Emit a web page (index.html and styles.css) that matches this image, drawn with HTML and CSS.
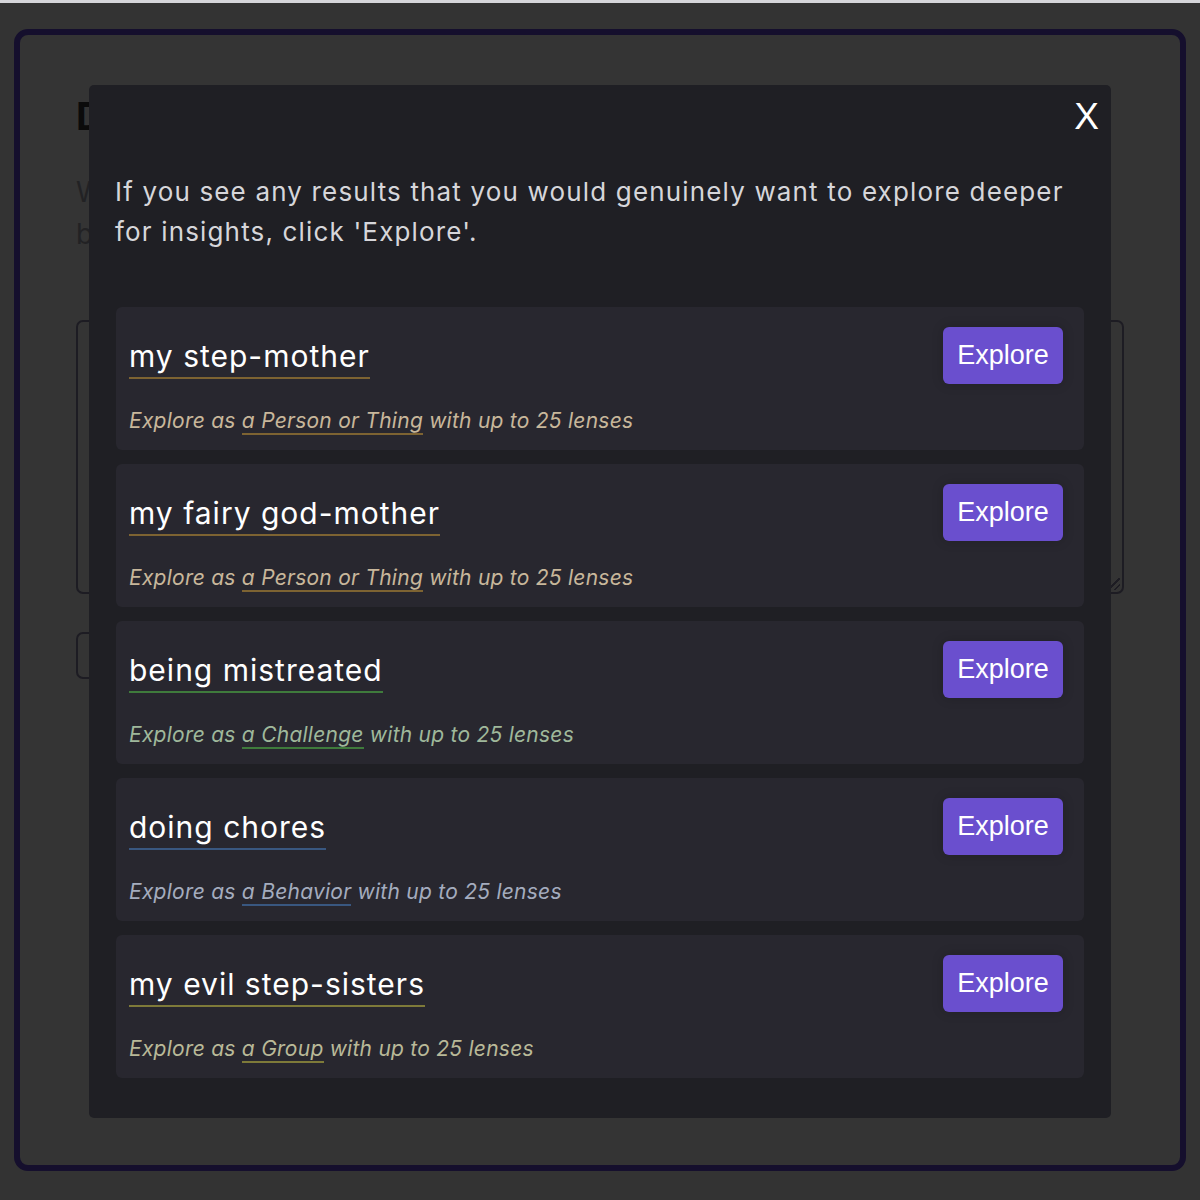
FILE: index.html
```html
<!DOCTYPE html>
<html lang="en">
<head>
<meta charset="utf-8">
<title>Explore results</title>
<link rel="stylesheet" href="styles.css">
</head>
<body>
<div class="topline"></div>
<div class="page">
  <div class="panel">
    <h1 class="panel-title">Describe</h1>
    <p class="panel-text">What is happening<br>but not</p>
    <div class="textarea"><span class="grip"></span></div>
    <div class="submit"></div>
  </div>
</div>

<div class="modal">
  <div class="modal-head"><span class="close">X</span></div>
  <p class="intro">If you see any results that you would genuinely want to explore deeper for insights, click 'Explore'.</p>
  <div class="results">
    <div class="result person">
      <div class="result-row">
        <span class="result-title">my step-mother</span>
        <button class="explore">Explore</button>
      </div>
      <p class="result-sub">Explore as <span class="kind">a Person or Thing</span> with up to 25 lenses</p>
    </div>
    <div class="result person">
      <div class="result-row">
        <span class="result-title">my fairy god-mother</span>
        <button class="explore">Explore</button>
      </div>
      <p class="result-sub">Explore as <span class="kind">a Person or Thing</span> with up to 25 lenses</p>
    </div>
    <div class="result challenge">
      <div class="result-row">
        <span class="result-title">being mistreated</span>
        <button class="explore">Explore</button>
      </div>
      <p class="result-sub">Explore as <span class="kind">a Challenge</span> with up to 25 lenses</p>
    </div>
    <div class="result behavior">
      <div class="result-row">
        <span class="result-title">doing chores</span>
        <button class="explore">Explore</button>
      </div>
      <p class="result-sub">Explore as <span class="kind">a Behavior</span> with up to 25 lenses</p>
    </div>
    <div class="result group">
      <div class="result-row">
        <span class="result-title">my evil step-sisters</span>
        <button class="explore">Explore</button>
      </div>
      <p class="result-sub">Explore as <span class="kind">a Group</span> with up to 25 lenses</p>
    </div>
  </div>
</div>
</body>
</html>
```

FILE: styles.css
```css
* { box-sizing: border-box; }
html, body { margin: 0; padding: 0; }
body {
  background: #333333;
  width: 1200px;
  height: 1200px;
  overflow: hidden;
  position: relative;
  font-family: Inter, "Noto Sans", sans-serif;
}
.topline {
  height: 3px;
  background: #d6d6da;
}
.page {
  padding: 26px 14px 0 14px;
}
.panel {
  height: 1142px;
  border: 6px solid #150f2d;
  border-radius: 14px;
  background: #343434;
  padding: 58px 56px 0 56px;
}
.panel-title {
  margin: 0;
  font-family: Inter, sans-serif;
  font-weight: 700;
  font-size: 38px;
  line-height: 46px;
  color: #0b0b0b;
}
.panel-text {
  margin: 32px 0 0 0;
  font-family: Inter, sans-serif;
  font-size: 28px;
  line-height: 42px;
  color: #222224;
}
.textarea {
  position: relative;
  margin-top: 65px;
  height: 274px;
  border: 2px solid #1d1c23;
  border-radius: 7px;
}
.grip {
  position: absolute;
  right: 2px;
  bottom: 2px;
  width: 12px;
  height: 12px;
  background: linear-gradient(135deg, transparent 45%, #1d1c23 45%, #1d1c23 55%, transparent 55%, transparent 72%, #1d1c23 72%, #1d1c23 82%, transparent 82%);
}
.submit {
  margin-top: 38px;
  width: 220px;
  height: 47px;
  border: 2px solid #1d1c23;
  border-radius: 7px;
}

.modal {
  position: absolute;
  left: 89px;
  top: 85px;
  width: 1022px;
  background: #1f1f24;
  border-radius: 5px;
  padding: 13px 12px 40px 26px;
}
.modal-head {
  display: flex;
  justify-content: flex-end;
}
.close {
  font-family: "Liberation Sans", Arial, sans-serif;
  font-size: 37px;
  line-height: 37px;
  color: #ffffff;
}
.intro {
  margin: 37px 14px 0 0;
  font-size: 26px;
  line-height: 40px;
  letter-spacing: 1.16px;
  color: #d6d6da;
}
.results {
  margin: 55px 15px 0 1px;
  display: flex;
  flex-direction: column;
  gap: 14px;
}
.result {
  background: #28272f;
  border-radius: 6px;
  padding: 20px 21px 15px 13px;
}
.result-row {
  display: flex;
  justify-content: space-between;
  align-items: flex-start;
}
.result-title {
  margin-top: 11px;
  font-size: 30px;
  line-height: 36px;
  letter-spacing: 1px;
  color: #ffffff;
  padding-bottom: 3px;
  border-bottom: 2px solid #7d6332;
}
.explore {
  width: 120px;
  height: 57px;
  border: none;
  border-radius: 6px;
  background: #6a4fce;
  color: #ffffff;
  font-family: "Liberation Sans", Arial, sans-serif;
  font-size: 27px;
  padding: 0;
  box-shadow: 0 0 12px rgba(0, 0, 0, 0.18);
}
.result-sub {
  margin: 23px 0 0 0;
  font-size: 21px;
  line-height: 28px;
  font-style: italic;
  letter-spacing: 0.25px;
  color: #c8b79b;
}
.kind {
  border-bottom: 2px solid #7d6332;
}
.challenge .result-title, .challenge .kind { border-bottom-color: #3f7b3c; }
.challenge .result-sub { color: #9fb89b; }
.behavior .result-title, .behavior .kind { border-bottom-color: #395780; }
.behavior .result-sub { color: #a4acbe; }
.group .result-title, .group .kind { border-bottom-color: #7e7a39; }
.group .result-sub { color: #b9b998; }
```
